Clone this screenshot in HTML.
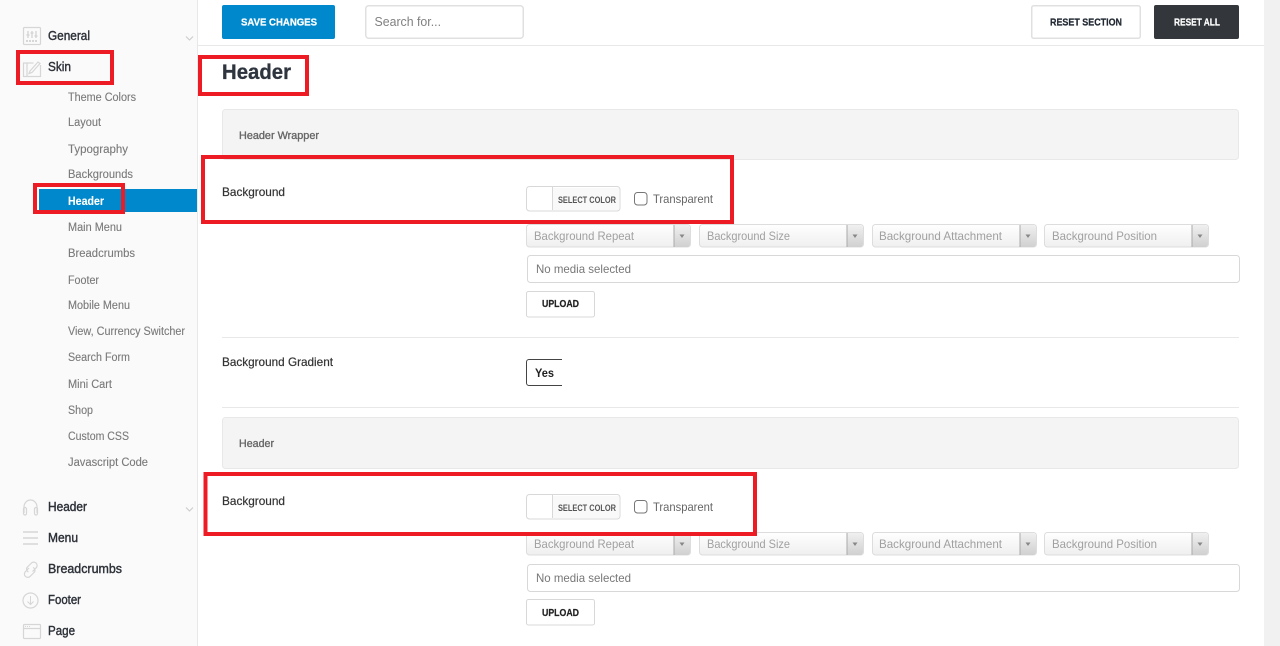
<!DOCTYPE html>
<html lang="en"><head><meta charset="utf-8"><title>Header</title>
<style>
html,body{margin:0;padding:0;width:1280px;height:646px;overflow:hidden;background:#fff}
svg{display:block}
text{font-family:"Liberation Sans",sans-serif;white-space:pre}
.m{font-size:12.500px;fill:#2d3138;stroke:#2d3138;stroke-width:.4px}
.s{font-size:11.500px;fill:#7a7a7a;stroke:#7a7a7a;stroke-width:.12px}
.b{font-size:10.500px;font-weight:700;stroke-width:.25px}
.l{font-size:12px;fill:#333;stroke:#333;stroke-width:.2px}
.h{font-size:11px;fill:#666;stroke:#666;stroke-width:.35px}
.o{font-size:12px;fill:#a0a0a0}
.t{font-size:12px;fill:#666}
.k{font-size:9px;font-weight:700;fill:#555}
.i{fill:none;stroke:#d6d6d6;stroke-width:1.200}
.r{fill:none;stroke:#ed1c24;stroke-width:4}
</style></head><body>
<svg width="1280" height="646" viewBox="0 0 1280 646" xmlns="http://www.w3.org/2000/svg">
<defs>
<linearGradient id="g1" x1="0" y1="0" x2="0" y2="1"><stop offset="0" stop-color="#fff"/><stop offset="1" stop-color="#efefef"/></linearGradient>
<linearGradient id="g2" x1="0" y1="0" x2="0" y2="1"><stop offset="0" stop-color="#f0f0f0"/><stop offset="1" stop-color="#d0d0d0"/></linearGradient>
<g id="sel"><rect x=".5" y=".5" width="164" height="22.500" rx="3" fill="url(#g1)" stroke="#ddd"/><path d="M148 1h13a3 3 0 0 1 3 3v16a3 3 0 0 1-3 3h-13z" fill="url(#g2)"/><path d="M148 1v22" stroke="#aaa"/><path d="M153.500 10.500h5l-2.500 3.500z" fill="#888"/></g>
<path id="chev" d="M0 0l3.500 3.500 3.500-3.500" fill="none" stroke="#ccc" stroke-width="1.100"/>
</defs>

<!-- sidebar -->
<rect x="0" y="0" width="197" height="646" fill="#fafafa"/>
<rect x="197" y="0" width="1" height="646" fill="#e8e8e8"/>
<rect x="1264" y="0" width="16" height="646" fill="#f1f1f1"/>
<rect x="198" y="45" width="1066" height="1" fill="#e8e8e8"/>
<rect x="39" y="189" width="158" height="23" fill="#0088cc"/>

<!-- sidebar icons -->
<g class="i">
<rect x="23.500" y="27.500" width="17" height="17" rx="1"/>
<path d="M28 31v7M32 31v7M36 31v7" stroke-width="1.400"/>
<path d="M26.500 35h3M30.500 33h3M34.500 36h3" stroke-width="1.400"/>
<path d="M26 41h12" stroke-width="2" stroke-dasharray="2 1"/>
<path d="M40.500 65v11.500H23.500V63h10"/>
<path d="M27 63.500v13"/>
<path d="M30 71l8-9 2 1.500-8 9-3 1z"/>
<path d="M24 513v-6a6.500 7 0 0 1 13 0v6"/>
<rect x="23.500" y="507.500" width="3" height="7.500" rx="1.500"/>
<rect x="34.500" y="507.500" width="3" height="7.500" rx="1.500"/>
<path d="M23 532h15M23 538h15M23 544h15" stroke-width="1.500"/>
<path d="M29 568l-3.500 3.500a3 3 0 0 0 4.500 5l4-4a3 3 0 0 0-1-5"/>
<path d="M32.500 571.500l3.500-3.500a3 3 0 0 0-4.500-5l-4 4a3 3 0 0 0 1 5"/>
<circle cx="30.500" cy="600.500" r="7.500"/>
<path d="M30.500 596v8M27.500 601.500l3 3 3-3" stroke-width="1"/>
<rect x="23.500" y="624.500" width="17" height="14" rx="1"/>
<path d="M23.500 628.500h17"/>
<path d="M25 626.500h5" stroke-width="1" stroke-dasharray="1 1"/>
</g>
<use href="#chev" x="186" y="36.500"/>
<use href="#chev" x="186" y="507.500"/>

<!-- sidebar main labels -->
<text class="m" x="48" y="40" textLength="42" lengthAdjust="spacingAndGlyphs">General</text>
<text class="m" x="48" y="71" textLength="23" lengthAdjust="spacingAndGlyphs">Skin</text>
<text class="m" x="48" y="511" textLength="39" lengthAdjust="spacingAndGlyphs">Header</text>
<text class="m" x="48" y="542" textLength="30" lengthAdjust="spacingAndGlyphs">Menu</text>
<text class="m" x="48" y="573" textLength="74" lengthAdjust="spacingAndGlyphs">Breadcrumbs</text>
<text class="m" x="48" y="604" textLength="33" lengthAdjust="spacingAndGlyphs">Footer</text>
<text class="m" x="48" y="635" textLength="27" lengthAdjust="spacingAndGlyphs">Page</text>

<!-- sidebar sub labels -->
<text class="s" x="68" y="101" textLength="68" lengthAdjust="spacingAndGlyphs">Theme Colors</text>
<text class="s" x="68" y="126" textLength="33" lengthAdjust="spacingAndGlyphs">Layout</text>
<text class="s" x="68" y="153" textLength="60" lengthAdjust="spacingAndGlyphs">Typography</text>
<text class="s" x="68" y="178" textLength="65" lengthAdjust="spacingAndGlyphs">Backgrounds</text>
<text class="s" x="68" y="205" textLength="36" lengthAdjust="spacingAndGlyphs" style="fill:#fff;stroke:#fff;font-weight:700">Header</text>
<text class="s" x="68" y="231" textLength="54" lengthAdjust="spacingAndGlyphs">Main Menu</text>
<text class="s" x="68" y="257" textLength="67" lengthAdjust="spacingAndGlyphs">Breadcrumbs</text>
<text class="s" x="68" y="284" textLength="31" lengthAdjust="spacingAndGlyphs">Footer</text>
<text class="s" x="68" y="309" textLength="62" lengthAdjust="spacingAndGlyphs">Mobile Menu</text>
<text class="s" x="68" y="335" textLength="117" lengthAdjust="spacingAndGlyphs">View, Currency Switcher</text>
<text class="s" x="68" y="361" textLength="62" lengthAdjust="spacingAndGlyphs">Search Form</text>
<text class="s" x="68" y="388" textLength="44" lengthAdjust="spacingAndGlyphs">Mini Cart</text>
<text class="s" x="68" y="414" textLength="25" lengthAdjust="spacingAndGlyphs">Shop</text>
<text class="s" x="68" y="440" textLength="61" lengthAdjust="spacingAndGlyphs">Custom CSS</text>
<text class="s" x="68" y="466" textLength="80" lengthAdjust="spacingAndGlyphs">Javascript Code</text>

<!-- top bar -->
<rect x="222" y="5" width="113" height="34" rx="2" fill="#0088cc"/>
<text class="b" x="241" y="25.500" textLength="76" lengthAdjust="spacingAndGlyphs" fill="#fff" stroke="#fff">SAVE CHANGES</text>
<rect x="365.750" y="5.750" width="157.500" height="32.500" rx="3" fill="#fff" stroke="#e0e0e0" stroke-width="1.500"/>
<text x="374.500" y="26" textLength="66.500" lengthAdjust="spacingAndGlyphs" font-size="13" fill="#808080">Search for...</text>
<rect x="1031.750" y="5.750" width="108.500" height="32.500" rx="2" fill="#fff" stroke="#e0e0e0" stroke-width="1.500"/>
<text class="b" x="1050" y="25.500" textLength="72" lengthAdjust="spacingAndGlyphs" fill="#222933" stroke="#222933">RESET SECTION</text>
<rect x="1154" y="5" width="85" height="34" rx="2" fill="#33363b"/>
<text class="b" x="1174" y="25.500" textLength="46" lengthAdjust="spacingAndGlyphs" fill="#fff" stroke="#fff">RESET ALL</text>

<text x="222" y="79" textLength="69" lengthAdjust="spacingAndGlyphs" font-size="21.500" font-weight="700" fill="#2e353e" stroke="#2e353e" stroke-width=".3">Header</text>

<!-- section 1 -->
<rect x="222.500" y="109.500" width="1016" height="50" rx="3" fill="#f4f4f4" stroke="#e8e8e8"/>
<text class="h" x="239" y="139" textLength="80" lengthAdjust="spacingAndGlyphs">Header Wrapper</text>
<text class="l" x="222" y="196" textLength="63" lengthAdjust="spacingAndGlyphs">Background</text>

<rect x="526.500" y="186.500" width="93.500" height="24.500" rx="3" fill="#fff" stroke="#d8d8d8"/>
<rect x="553" y="188" width="66" height="22" fill="#f9f9f9"/>
<rect x="552" y="187" width="1" height="23" fill="#d8d8d8"/>
<text class="k" x="558" y="203" textLength="58" lengthAdjust="spacingAndGlyphs">SELECT COLOR</text>
<rect x="634.500" y="192.500" width="12.500" height="12.500" rx="3" fill="#fff" stroke="#767676"/>
<text class="t" x="653" y="203" textLength="60" lengthAdjust="spacingAndGlyphs">Transparent</text>

<use href="#sel" x="526" y="224"/><use href="#sel" x="699" y="224"/><use href="#sel" x="872" y="224"/><use href="#sel" x="1044" y="224"/>
<text class="o" x="534" y="240" textLength="100" lengthAdjust="spacingAndGlyphs">Background Repeat</text>
<text class="o" x="707" y="240" textLength="83" lengthAdjust="spacingAndGlyphs">Background Size</text>
<text class="o" x="879" y="240" textLength="123" lengthAdjust="spacingAndGlyphs">Background Attachment</text>
<text class="o" x="1052" y="240" textLength="105" lengthAdjust="spacingAndGlyphs">Background Position</text>

<rect x="527.500" y="255.500" width="712" height="27" rx="3" fill="#fff" stroke="#d8d8d8"/>
<text class="t" x="536" y="273" textLength="95" lengthAdjust="spacingAndGlyphs" style="fill:#777">No media selected</text>
<rect x="526.500" y="291.500" width="68" height="25.500" rx="2" fill="#fff" stroke="#d8d8d8"/>
<text class="b" x="542" y="307" textLength="37" lengthAdjust="spacingAndGlyphs" fill="#222" stroke="#222">UPLOAD</text>

<rect x="222" y="337" width="1017" height="1" fill="#e8e8e8"/>
<text class="l" x="222" y="366" textLength="111" lengthAdjust="spacingAndGlyphs">Background Gradient</text>
<path d="M562 359.500h-33a2.500 2.500 0 0 0-2.500 2.500v21a2.500 2.500 0 0 0 2.500 2.500h33" fill="#fff" stroke="#444"/>
<text x="535" y="377" textLength="19" lengthAdjust="spacingAndGlyphs" font-size="12" font-weight="700" fill="#222">Yes</text>
<rect x="222" y="407" width="1017" height="1" fill="#e8e8e8"/>

<!-- section 2 -->
<rect x="222.500" y="417.500" width="1016" height="51" rx="3" fill="#f4f4f4" stroke="#e8e8e8"/>
<text class="h" x="239" y="447" textLength="35" lengthAdjust="spacingAndGlyphs">Header</text>
<text class="l" x="222" y="505" textLength="63" lengthAdjust="spacingAndGlyphs">Background</text>

<rect x="526.500" y="494.500" width="93.500" height="24.500" rx="3" fill="#fff" stroke="#d8d8d8"/>
<rect x="553" y="496" width="66" height="22" fill="#f9f9f9"/>
<rect x="552" y="495" width="1" height="23" fill="#d8d8d8"/>
<text class="k" x="558" y="511" textLength="58" lengthAdjust="spacingAndGlyphs">SELECT COLOR</text>
<rect x="634.500" y="500.500" width="12.500" height="12.500" rx="3" fill="#fff" stroke="#767676"/>
<text class="t" x="653" y="511" textLength="60" lengthAdjust="spacingAndGlyphs">Transparent</text>

<use href="#sel" x="526" y="532"/><use href="#sel" x="699" y="532"/><use href="#sel" x="872" y="532"/><use href="#sel" x="1044" y="532"/>
<text class="o" x="534" y="548" textLength="100" lengthAdjust="spacingAndGlyphs">Background Repeat</text>
<text class="o" x="707" y="548" textLength="83" lengthAdjust="spacingAndGlyphs">Background Size</text>
<text class="o" x="879" y="548" textLength="123" lengthAdjust="spacingAndGlyphs">Background Attachment</text>
<text class="o" x="1052" y="548" textLength="105" lengthAdjust="spacingAndGlyphs">Background Position</text>

<rect x="527.500" y="564.500" width="712" height="27" rx="3" fill="#fff" stroke="#d8d8d8"/>
<text class="t" x="536" y="582" textLength="95" lengthAdjust="spacingAndGlyphs" style="fill:#777">No media selected</text>
<rect x="526.500" y="599.500" width="68" height="25.500" rx="2" fill="#fff" stroke="#d8d8d8"/>
<text class="b" x="542" y="616" textLength="37" lengthAdjust="spacingAndGlyphs" fill="#222" stroke="#222">UPLOAD</text>

<!-- red annotation boxes -->
<rect class="r" x="18" y="52" width="94" height="31"/>
<rect class="r" x="35" y="185" width="88" height="27"/>
<rect class="r" x="200" y="57" width="107" height="37"/>
<rect class="r" x="203" y="157" width="529" height="65"/>
<rect class="r" x="205.500" y="474" width="549.500" height="60"/>
</svg>
</body></html>
